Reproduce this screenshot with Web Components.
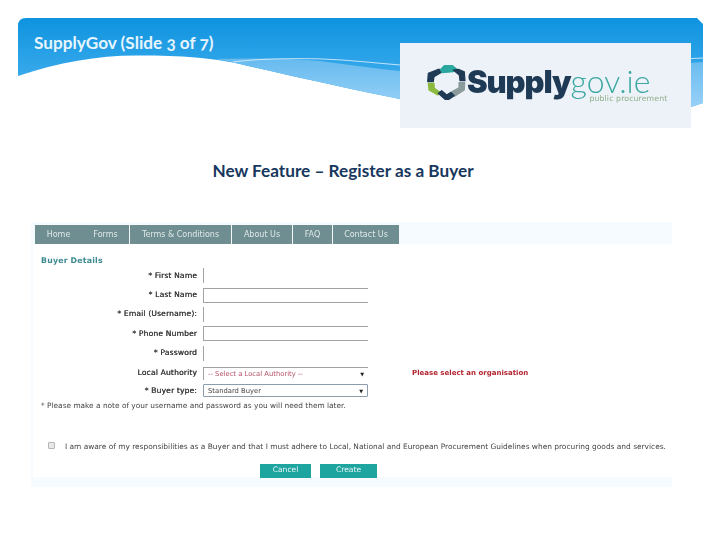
<!DOCTYPE html>
<html>
<head>
<meta charset="utf-8">
<title>SupplyGov</title>
<style>
    html, body { margin: 0; background: #fff; }
</style>
</head>
<body>
<slide-page>
    <slide-header slot="header">SupplyGov (Slide 3 of 7)</slide-header>
    <slide-heading slot="heading">New Feature – Register as a Buyer</slide-heading>
    <buyer-form slot="shot">
        <site-nav slot="nav"></site-nav>
        <form-row slot="rows" label="* First Name" kind="left"></form-row>
        <form-row slot="rows" label="* Last Name" kind="open"></form-row>
        <form-row slot="rows" label="* Email (Username):" kind="left"></form-row>
        <form-row slot="rows" label="* Phone Number" kind="open"></form-row>
        <form-row slot="rows" label="* Password" kind="left"></form-row>
        <form-row slot="rows" label="Local Authority" kind="select-top" value="-- Select a Local Authority --" error="Please select an organisation"></form-row>
        <form-row slot="rows" label="* Buyer type:" kind="select" value="Standard Buyer"></form-row>
    </buyer-form>
</slide-page>

<script>
class SlidePage extends HTMLElement {
    constructor() {
        super();
        this.attachShadow({mode: 'open'});
        this.shadowRoot.innerHTML = `
            <style>
                :host {
                    display: flex;
                    flex-flow: column;
                    width: 720px;
                    height: 540px;
                    overflow: hidden;
                    background: #fff;
                    padding-top: 18px;
                    box-sizing: border-box;
                }
            </style>
            <slot name="header"></slot>
            <slot name="heading"></slot>
            <slot name="shot"></slot>
        `;
    }
}

class SlideHeader extends HTMLElement {
    constructor() {
        super();
        this.attachShadow({mode: 'open'});
        this.shadowRoot.innerHTML = `
            <style>
                :host {
                    display: flex;
                    justify-content: space-between;
                    align-items: flex-start;
                    position: relative;
                    width: 685px;
                    height: 110px;
                    margin-left: 18px;
                    padding: 0 12px 0 16px;
                    box-sizing: border-box;
                }
                svg.banner {
                    position: absolute;
                    top: 0;
                    left: 0;
                }
                h1 {
                    position: relative;
                    margin: 14px 0 0;
                    font: 700 17.2px/22px Lato, "Open Sans", sans-serif;
                    font-variant-numeric: oldstyle-nums;
                    color: #e6f5fd;
                }
                .logo {
                    position: relative;
                    margin-top: 25px;
                }
            </style>
            <svg class="banner" width="685" height="100" viewBox="18 18 685 100">
                <defs>
                    <linearGradient id="top" gradientUnits="userSpaceOnUse" x1="0" y1="18" x2="0" y2="72">
                        <stop offset="0" stop-color="#0e93df"/>
                        <stop offset="1" stop-color="#35a8ea"/>
                    </linearGradient>
                    <linearGradient id="low" gradientUnits="userSpaceOnUse" x1="0" y1="60" x2="0" y2="105">
                        <stop offset="0" stop-color="#68bbef"/>
                        <stop offset="1" stop-color="#96d0f7"/>
                    </linearGradient>
                </defs>
                <path fill="url(#top)" d="M18 76 L18 26 Q18 18 26 18 L697 18 L703 24 L703 103 L691 107 C590 128 500 120 400 99 C350 89 300 78 240 64 C215 58 180 55.5 140 55.5 C100 55 60 62 18 76 Z"/>
                <path fill="url(#low)" d="M215 59 C250 58 290 58 320 61 C350 65 380 69 400 71 C500 76 620 68 703 62 L703 103 L691 107 C590 128 500 120 400 99 C350 89 300 78 240 64 C232 62 224 60 215 59 Z"/>
                <path fill="none" stroke="#e4f3fd" stroke-width=".8" d="M233 62 C255 59 290 58 323 59 C350 60 375 63 400 65 C500 70 620 62 703 58"/>
            </svg>
            <h1><slot></slot></h1>
            <supply-logo class="logo"></supply-logo>
        `;
    }
}

class SupplyLogo extends HTMLElement {
    constructor() {
        super();
        this.attachShadow({mode: 'open'});
        this.shadowRoot.innerHTML = `
            <style>
                :host {
                    display: flex;
                    align-items: flex-start;
                    width: 291px;
                    height: 85px;
                    box-sizing: border-box;
                    padding: 19px 0 0 27px;
                    background: #edf2f9;
                    filter: blur(.4px);
                }
                svg { flex: none; margin-top: 3px; }
                polygon { stroke-width: 1.2; stroke-linejoin: round; }
                .words { position: relative; white-space: nowrap; }
                .supply {
                    font: 900 31px/38px Inter, sans-serif;
                    letter-spacing: -1.1px;
                    color: #1f3a54;
                }
                .gov {
                    font: 300 32px/38px Lato, sans-serif;
                    color: #3aa8a0;
                }
                .sub {
                    position: absolute;
                    top: 32px;
                    right: -17px;
                    font: 400 7.8px/10px "DejaVu Sans", sans-serif;
                    letter-spacing: .1px;
                    color: #8fae86;
                }
            </style>
            <svg width="40" height="36" viewBox="0 0 40 36">
                <polygon fill="#2aa79e" stroke="#2aa79e" points="13,5 18,0 24.7,0 29.7,4.3 26.3,6.7 14.7,7.7"/>
                <polygon fill="#1f3a54" stroke="#1f3a54" points="26.3,5 31.3,4.3 37.3,6.7 38,15.7 33,15.7 32.3,10"/>
                <polygon fill="#1f3a54" stroke="#1f3a54" points="1.3,8.3 12,4 13.7,7.7 7,11.7 6.3,16.7 .7,16.7"/>
                <polygon fill="#8cba3f" stroke="#8cba3f" points="1.3,18.3 7,18.3 7.3,23.3 13,27.3 10.7,30 2,25"/>
                <polygon fill="#8b9b9b" stroke="#8b9b9b" points="24.7,26.7 32,22.7 32,17.7 37.7,17.7 37.3,25 28,31"/>
                <polygon fill="#1f3a54" stroke="#1f3a54" points="11.3,28.3 14.7,25.7 19.7,30 24,27.3 27.3,30.7 22,34.3 18,34.3"/>
            </svg>
            <div class="words">
                <span class="supply">Supply</span><span class="gov">gov.ie</span>
                <div class="sub">public procurement</div>
            </div>
        `;
    }
}

class SlideHeading extends HTMLElement {
    constructor() {
        super();
        this.attachShadow({mode: 'open'});
        this.shadowRoot.innerHTML = `
            <style>
                :host {
                    display: block;
                    width: 686px;
                    margin-top: 32px;
                    font: 700 17.2px/22px Lato, "Open Sans", sans-serif;
                    color: #17375e;
                    text-align: center;
                }
            </style>
            <slot></slot>
        `;
    }
}

class SiteNav extends HTMLElement {
    constructor() {
        super();
        this.attachShadow({mode: 'open'});
        this.shadowRoot.innerHTML = `
            <style>
                :host {
                    display: flex;
                    width: 364px;
                    height: 19px;
                    background: #6f8e92;
                    font-size: 8px;
                    line-height: 19px;
                    color: #dfe8e7;
                    text-align: center;
                }
                span { display: block; flex: none; border-right: 1px solid #f4f8f8; box-sizing: border-box; }
                span.plain { border-right: 0; }
                span:last-child { border-right: 0; }
            </style>
            <span class="plain" style="width:47px">Home</span>
            <span style="width:48px">Forms</span>
            <span style="width:102px">Terms &amp; Conditions</span>
            <span style="width:61px">About Us</span>
            <span style="width:40px">FAQ</span>
            <span style="width:66px">Contact Us</span>
        `;
    }
}

class FormRow extends HTMLElement {
    constructor() {
        super();
        this.attachShadow({mode: 'open'});
    }

    connectedCallback() {
        const kind = this.getAttribute('kind');
        const isSelect = kind.startsWith('select');
        this.shadowRoot.innerHTML = `
            <style>
                :host {
                    display: grid;
                    flex: none;
                    grid-template-columns: 156px 165px auto;
                    column-gap: 6px;
                    align-items: center;
                    height: 19.4px;
                    white-space: nowrap;
                }
                :host([kind="select"]) { margin-top: -1.5px; }
                label { text-align: right; color: #3a3a3a; letter-spacing: .15px; text-shadow: .3px 0 currentColor; }
                .box {
                    display: flex;
                    justify-content: space-between;
                    align-items: center;
                    height: 15px;
                    box-sizing: border-box;
                    padding: 0 4px;
                    font-size: 6.8px;
                    color: #444;
                }
                .left { border-left: 1px solid #a2a2a2; }
                .open { border: 1px solid #a2a2a2; border-right: 0; }
                .select-top { height: 13px; margin-top: 1px; border: 1px solid #a2a2a2; border-right: 0; border-bottom: 0; color: #b5506a; }
                .select { height: 13px; border: 1px solid #8b9dad; border-radius: 1px; }
                .arrow { font-size: 5px; color: #222; }
                .error { margin-left: 38px; color: #b3232f; font-weight: 700; font-size: 7px; }
            </style>
            <label>${this.getAttribute('label')}</label>
            <div class="box ${kind}">
                <span>${this.getAttribute('value') || ''}</span>
                ${isSelect ? '<span class="arrow">▼</span>' : ''}
            </div>
            ${this.hasAttribute('error') ? `<div class="error">${this.getAttribute('error')}</div>` : ''}
        `;
    }
}

class BuyerForm extends HTMLElement {
    constructor() {
        super();
        this.attachShadow({mode: 'open'});
        this.shadowRoot.innerHTML = `
            <style>
                :host {
                    display: block;
                    width: 641px;
                    height: 265px;
                    margin: 40px 0 0 31px;
                    padding: 3px 0 0 4px;
                    box-sizing: border-box;
                    background: #f5fbfe;
                    font: 400 7.6px/10px "DejaVu Sans", Verdana, sans-serif;
                    color: #333;
                    filter: blur(.35px);
                }
                .panel {
                    display: flex;
                    flex-flow: column;
                    height: 233px;
                    margin-left: -2px;
                    padding-left: 8px;
                    background: #fff;
                    box-sizing: border-box;
                }
                h2 {
                    margin: 12px 0 0;
                    font-size: 7.8px;
                    line-height: 10px;
                    color: #3c8a90;
                    letter-spacing: .2px;
                }
                .note { margin-top: .5px; font-size: 7.4px; color: #444; }
                .agree {
                    display: flex;
                    align-items: center;
                    margin: 31px 0 0 8px;
                    font-size: 7.43px;
                    color: #444;
                    white-space: nowrap;
                }
                .tick {
                    flex: none;
                    width: 7px;
                    height: 7px;
                    margin: -3px 10px 0 -1px;
                    border: 1px solid #b5b5b5;
                    border-radius: 1px;
                    background: #e9e9e9;
                    box-sizing: border-box;
                }
                .buttons {
                    display: flex;
                    flex: none;
                    gap: 9px;
                    margin: 12px 0 0 219px;
                }
            </style>
            <slot name="nav"></slot>
            <div class="panel">
                <h2>Buyer Details</h2>
                <slot name="rows"></slot>
                <div class="note">* Please make a note of your username and password as you will need them later.</div>
                <div class="agree"><span class="tick"></span><span>I am aware of my responsibilities as a Buyer and that I must adhere to Local, National and European Procurement Guidelines when procuring goods and services.</span></div>
                <div class="buttons">
                    <teal-button style="width:51px">Cancel</teal-button>
                    <teal-button style="width:57px">Create</teal-button>
                </div>
            </div>
        `;
    }
}

class TealButton extends HTMLElement {
    constructor() {
        super();
        this.attachShadow({mode: 'open'});
        this.shadowRoot.innerHTML = `
            <style>
                :host {
                    display: block;
                    height: 14px;
                    background: #1fa5a0;
                    color: #e8f6f5;
                    font-size: 7.6px;
                    line-height: 12px;
                    text-align: center;
                }
            </style>
            <slot></slot>
        `;
    }
}

customElements.define('slide-page', SlidePage);
customElements.define('slide-header', SlideHeader);
customElements.define('supply-logo', SupplyLogo);
customElements.define('slide-heading', SlideHeading);
customElements.define('site-nav', SiteNav);
customElements.define('form-row', FormRow);
customElements.define('buyer-form', BuyerForm);
customElements.define('teal-button', TealButton);
</script>
</body>
</html>
